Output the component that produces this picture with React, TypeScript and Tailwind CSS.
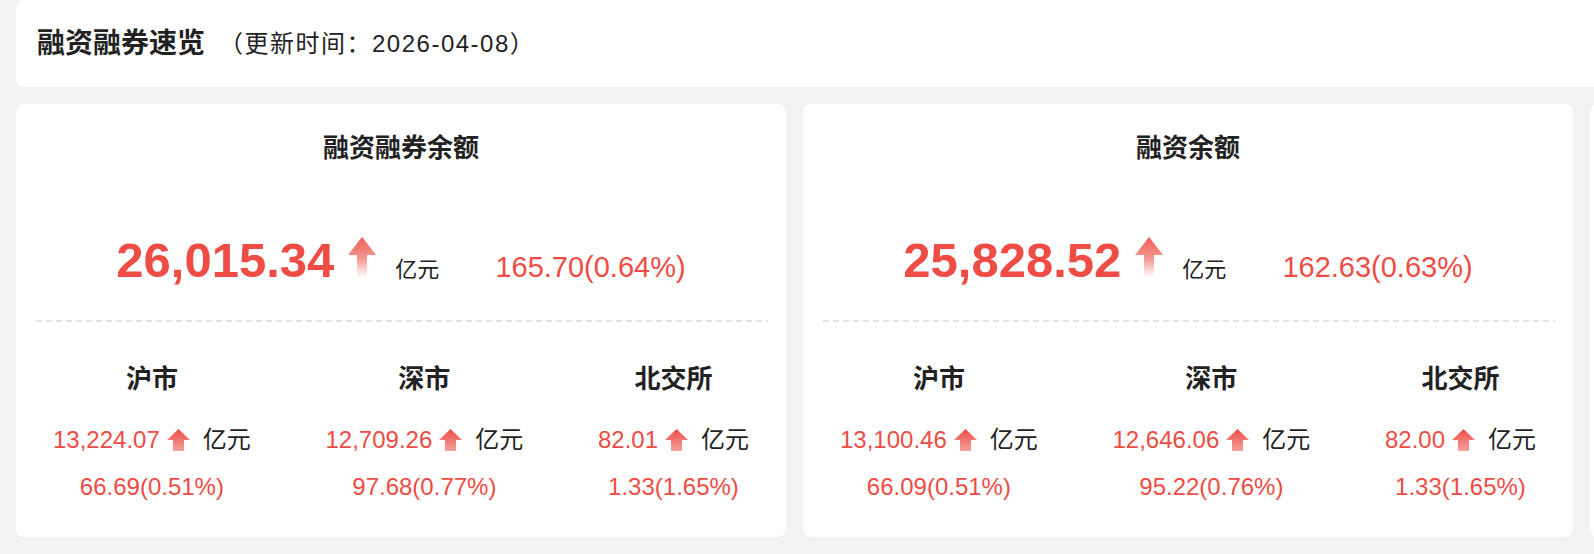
import React from 'react';

type Market = {
  name: string;
  value: string;
  change: string;
};

type Summary = {
  title: string;
  total: string;
  change: string;
  markets: Market[];
};

const summaries: Summary[] = [
  {
    title: '融资融券余额',
    total: '26,015.34',
    change: '165.70(0.64%)',
    markets: [
      { name: '沪市', value: '13,224.07', change: '66.69(0.51%)' },
      { name: '深市', value: '12,709.26', change: '97.68(0.77%)' },
      { name: '北交所', value: '82.01', change: '1.33(1.65%)' },
    ],
  },
  {
    title: '融资余额',
    total: '25,828.52',
    change: '162.63(0.63%)',
    markets: [
      { name: '沪市', value: '13,100.46', change: '66.09(0.51%)' },
      { name: '深市', value: '12,646.06', change: '95.22(0.76%)' },
      { name: '北交所', value: '82.00', change: '1.33(1.65%)' },
    ],
  },
];

const BigArrow = ({ id }: { id: string }) => (
  <svg width="28" height="40" viewBox="0 0 28 40" className="self-end mb-[2px]">
    <defs>
      <linearGradient id={id} x1="0" y1="0" x2="0" y2="1">
        <stop offset="0" stopColor="#ef5b53" />
        <stop offset="0.55" stopColor="#f59a94" />
        <stop offset="1" stopColor="#ffffff" />
      </linearGradient>
    </defs>
    <path d="M14 0 L28 18 L19 18 L19 40 L9 40 L9 18 L0 18 Z" fill={`url(#${id})`} />
  </svg>
);

const SmallArrow = ({ id }: { id: string }) => (
  <svg width="23" height="22" viewBox="0 0 23 22" className="self-end mb-[1px]">
    <defs>
      <linearGradient id={id} x1="0" y1="0" x2="0" y2="1">
        <stop offset="0" stopColor="#ee4c44" />
        <stop offset="1" stopColor="#f4a29d" />
      </linearGradient>
    </defs>
    <path d="M11.5 0 L23 11 L17 11 L17 22 L6 22 L6 11 L0 11 Z" fill={`url(#${id})`} />
  </svg>
);

const SummaryCard = ({ data, index }: { data: Summary; index: number }) => (
  <div className="w-[770px] h-[433px] shrink-0 bg-white rounded-[8px] flex flex-col">
    {/* title */}
    <div className="h-[88px] flex items-center justify-center text-[26px] font-bold text-[#222]">
      {data.title}
    </div>

    {/* total */}
    <div className="pt-[44px] flex items-baseline justify-center">
      <span className="text-[49px] leading-none font-bold text-[#ee4c44]">{data.total}</span>
      <span className="ml-[14px] flex">
        <BigArrow id={`big-${index}`} />
      </span>
      <span className="ml-[19px] text-[22px] leading-none text-[#222]">亿元</span>
      <span className="ml-[56px] text-[29px] leading-none text-[#ee4c44]">{data.change}</span>
    </div>

    <div className="mt-[35px] ml-[20px] mr-[18px] h-[2px] bg-[repeating-linear-gradient(to_right,#e3e3e3_0_6px,transparent_6px_10px)]" />

    {/* markets */}
    <div className="mt-[39px] px-[37px] flex justify-between">
      {data.markets.map((m, i) => (
        <div key={m.name} className="flex flex-col items-center">
          <div className="h-[36px] leading-[36px] text-[26px] font-bold text-[#222]">{m.name}</div>
          <div className="mt-[27px] h-[32px] flex items-baseline">
            <span className="text-[24px] leading-[32px] text-[#ee4c44]">{m.value}</span>
            <span className="ml-[7px] flex self-center">
              <SmallArrow id={`small-${index}-${i}`} />
            </span>
            <span className="ml-[13px] text-[24px] leading-[32px] text-[#222]">亿元</span>
          </div>
          <div className="mt-[15px] h-[32px] leading-[32px] text-[24px] text-[#ee4c44]">
            {m.change}
          </div>
        </div>
      ))}
    </div>
  </div>
);

export default function App() {
  return (
    <div
      className="w-screen h-screen overflow-hidden bg-[#f2f2f2]"
      style={{ fontFamily: '"Liberation Sans", "Noto Sans CJK SC", sans-serif' }}
    >
      <div className="w-max px-[16px]">
        <div className="h-[87px] bg-white rounded-[8px] flex items-center pl-[21px]">
          <span className="text-[28px] font-bold text-[#222]">融资融券速览</span>
          <span className="ml-[14px] text-[24px] tracking-[1.5px] text-[#222]">（更新时间：2026-04-08）</span>
        </div>
        <div className="mt-[17px] flex gap-[17px]">
          {summaries.map((s, i) => (
            <SummaryCard key={s.title} data={s} index={i} />
          ))}
          {/* next card, only its edge is in view */}
          <div className="w-[770px] h-[433px] shrink-0 bg-white rounded-[8px]" />
        </div>
      </div>
    </div>
  );
}
